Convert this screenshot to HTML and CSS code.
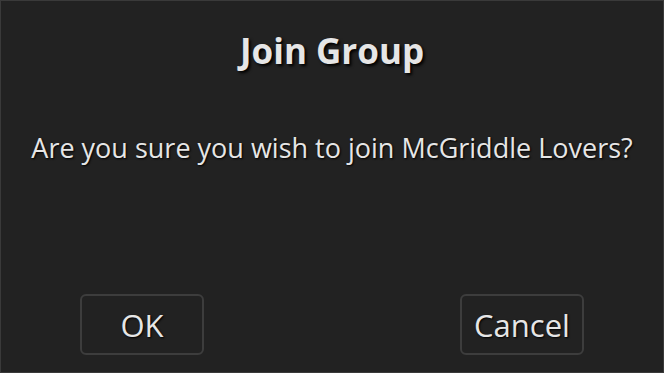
FILE: index.html
```html
<!DOCTYPE html>
<html lang="en">
  <head>
    <meta charset="UTF-8" />
    <meta name="viewport" content="width=device-width, initial-scale=1.0" />
    <title>Join Group</title>
    <link rel="stylesheet" href="styles.css">
  </head>
  <body>
    <!-- Confirm dialog -->
    <div class="dialog">
      <h1 class="dialog-title">Join Group</h1>
      <p class="dialog-message">Are you sure you wish to join McGriddle Lovers?</p>
      <div class="dialog-actions">
        <button class="dialog-btn" id="ok-btn">OK</button>
        <button class="dialog-btn" id="cancel-btn">Cancel</button>
      </div>
    </div>
  </body>
</html>
```

FILE: styles.css
```css
html, body {
  margin: 0;
  height: 100%;
  background: #222222;
}

body {
  font-family: "Open Sans", "Noto Sans", sans-serif;
  color: #e6e6e6;
}

.dialog {
  box-sizing: border-box;
  width: 664px;
  height: 373px;
  border: 1px solid #3a3a3a;
  background: #222222;
  display: flex;
  flex-direction: column;
  align-items: center;
}

.dialog-title {
  margin: 26px 0 0;
  font-size: 35px;
  font-weight: 700;
  line-height: 48px;
  text-shadow: 2px 2px 3px #000;
}

.dialog-message {
  margin: 55px 0 0;
  font-size: 27px;
  line-height: 36px;
  text-shadow: 1px 1px 2px #000;
}

.dialog-actions {
  margin-top: auto;
  margin-bottom: 17px;
  align-self: stretch;
  display: flex;
  justify-content: space-between;
  padding: 0 79px;
}

.dialog-btn {
  width: 124px;
  height: 61px;
  box-sizing: border-box;
  border: 2px solid #3d3d3d;
  border-radius: 6px;
  background: #222222;
  color: #e6e6e6;
  font-family: inherit;
  font-size: 31px;
  text-shadow: 1px 1px 2px #000;
  cursor: pointer;
}
```
